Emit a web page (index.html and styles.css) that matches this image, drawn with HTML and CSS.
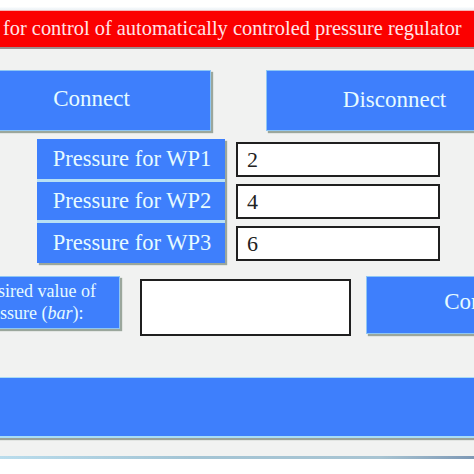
FILE: index.html
```html
<!DOCTYPE html>
<html lang="en">
<head>
<meta charset="utf-8">
<title>Pressure regulator control</title>
<link rel="stylesheet" href="styles.css">
</head>
<body>
<div class="screen">
  <div class="topstrip"></div>
  <div class="titlebar">for control of automatically controled pressure regulator</div>
  <div class="panel">
    <div class="row-buttons">
      <div class="btn btn-connect">Connect</div>
      <div class="btn btn-disconnect">Disconnect</div>
    </div>
    <div class="row-pressure">
      <div class="labels">
        <div class="plabel plabel-a">Pressure for WP1</div>
        <div class="plabel plabel-b">Pressure for WP2</div>
        <div class="plabel plabel-a">Pressure for WP3</div>
      </div>
      <div class="values">
        <div class="field">2</div>
        <div class="field">4</div>
        <div class="field">6</div>
      </div>
    </div>
    <div class="row-desired">
      <div class="desired-label">Desired value of<br>pressure (<i>bar</i>):</div>
      <div class="field field-desired"></div>
      <div class="btn btn-con">Connect</div>
    </div>
    <div class="bottom-bar"></div>
  </div>
  <div class="footer-line"></div>
</div>
</body>
</html>
```

FILE: styles.css
```css
* { box-sizing: border-box; }

html, body {
  margin: 0;
  padding: 0;
  background: #ffffff;
}

body {
  width: 474px;
  height: 474px;
  overflow: hidden;
  font-family: "Liberation Serif", "Times New Roman", serif;
}

.screen {
  width: 474px;
  overflow: hidden;
}

.topstrip {
  height: 10px;
  background: linear-gradient(to bottom, #ffffff 0, #ffffff 7px, #f4f8fb 8px, #eef3f6 10px);
}

.titlebar {
  height: 39px;
  background: #fb0000;
  border-top: 1px solid #f6b4b4;
  border-bottom: 2px solid #9c8e8e;
  color: #ffe4e8;
  font-size: 20.4px;
  line-height: 35px;
  padding-left: 3px;
  white-space: nowrap;
}

.panel {
  background: #f1f2f1;
  padding-top: 21px;
  padding-bottom: 18px;
}

.btn {
  background: #3e7ffc;
  color: #e6fbff;
  border: 1px solid #8ec6f4;
  box-shadow: 2px 2px 1px #9ba79c;
  display: flex;
  align-items: center;
  justify-content: center;
  font-size: 23px;
  white-space: nowrap;
  flex: none;
}

.row-buttons {
  display: flex;
  gap: 55px;
  margin-left: -28px;
}

.btn-connect {
  width: 239px;
  height: 61px;
  padding-bottom: 4px;
}

.btn-disconnect {
  width: 257px;
  height: 61px;
  padding-bottom: 2px;
}

.row-pressure {
  display: flex;
  gap: 11px;
  padding-left: 37px;
  margin-top: 8px;
}

.labels {
  width: 188px;
  display: flex;
  flex-direction: column;
  gap: 3px;
  background: #b8e0f4;
  box-shadow: 2px 2px 1px #9ba79c;
}

.plabel {
  background: #3e7ffc;
  color: #e6fbff;
  font-size: 22.5px;
  display: flex;
  align-items: center;
  justify-content: center;
  white-space: nowrap;
  padding-left: 2px;
}

.plabel-a { height: 40px; }
.plabel-b { height: 38px; }

.values {
  width: 204px;
  display: flex;
  flex-direction: column;
  gap: 7px;
  padding-top: 3px;
}

.field {
  height: 35px;
  background: #ffffff;
  border: 2px solid #1f1f1f;
  color: #222222;
  font-size: 22px;
  line-height: 31px;
  padding-left: 9px;
}

.row-desired {
  display: flex;
  align-items: flex-start;
  margin-left: -34px;
  margin-top: 13px;
  height: 60px;
}

.desired-label {
  width: 154px;
  height: 53px;
  flex: none;
  background: #3e7ffc;
  color: #e6fbff;
  border: 1px solid #8ec6f4;
  box-shadow: 2px 2px 1px #9ba79c;
  font-size: 18px;
  line-height: 22px;
  padding-left: 10px;
  padding-top: 3px;
  white-space: nowrap;
}

.field-desired {
  width: 211px;
  height: 57px;
  margin-left: 20px;
  margin-top: 3px;
  flex: none;
}

.btn-con {
  width: 233px;
  height: 58px;
  margin-left: 15px;
  padding-bottom: 6px;
}

.bottom-bar {
  margin-top: 41px;
  height: 61px;
  background: #3e7ffc;
  border-top: 1px solid #a9dcf5;
  border-bottom: 2px solid #a9dcf5;
  box-shadow: 0 2px 1px #9aa39a;
}

.footer-line {
  height: 3px;
  background: linear-gradient(to right, #b9dcec 0, #a3c4d4 40%, #a8c4d2 80%, #7d98b5 100%);
}
```
